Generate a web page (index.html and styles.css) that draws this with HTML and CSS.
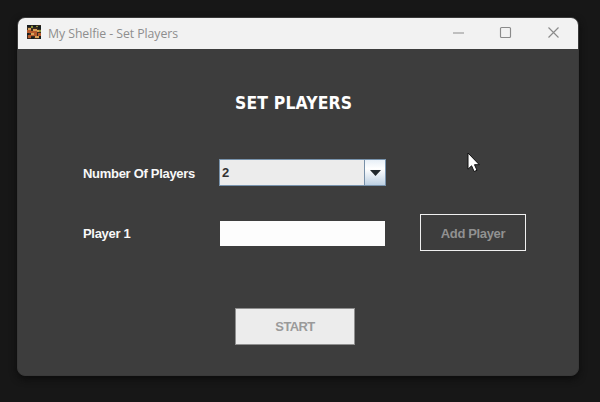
FILE: index.html
```html
<!DOCTYPE html>
<html lang="en">
<head>
<meta charset="utf-8">
<title>My Shelfie - Set Players</title>
<link rel="stylesheet" href="styles.css">
</head>
<body>
<main class="window">
  <header class="titlebar">
    <svg class="app-icon" viewBox="0 0 14 14" shape-rendering="crispEdges">
      <path fill="#3b2b20" d="M0 0h14v14H0z"/>
      <path fill="#b55a2c" d="M0 5h4v3H0zM4 6h6v5H4zM1 10h3v3H1zM11 8h3v3h-3z"/>
      <path fill="#d9a157" d="M1 3h3v2H1zM6 4h4v2H6zM4 8h3v2H4zM10 5h2v2h-2zM8 11h4v2H8z"/>
      <path fill="#171f20" d="M0 0h4v2H0zM6 0h3v2H6zM11 1h3v3h-3zM0 8h2v2H0zM12 11h2v3h-2zM4 12h3v2H4z"/>
      <path fill="#8e963b" d="M4 1h2v2H4zM9 1h2v1H9zM12 5h2v2h-2z"/>
    </svg>
    <span class="window-title">My Shelfie - Set Players</span>
    <svg class="controls" viewBox="0 0 110 14" fill="none" stroke="#8b8b8b" stroke-width="1.15">
      <path d="M2 7h11"/>
      <rect x="49.5" y="1.5" width="10" height="10" rx="1"/>
      <path d="M97.5 1.5l10 10m0-10l-10 10"/>
    </svg>
  </header>
  <form class="content">
    <h1>SET PLAYERS</h1>
    <div class="fields">
      <span class="label">Number Of Players</span>
      <div class="select">
        <span class="value">2</span>
        <span class="arrow"><svg viewBox="0 0 11 6"><path d="M0 0h11L5.5 6z" fill="#20272c"/></svg></span>
      </div>
      <span class="label player">Player 1</span>
      <input class="name" type="text" aria-label="Player 1">
      <button class="add" type="button" disabled>Add Player</button>
    </div>
    <button class="start" type="button" disabled>START</button>
  </form>
</main>
<svg class="cursor" viewBox="0 0 14 21"><path d="M1 1v16.2l3.6-3.4 2.5 5.7 2.9-1.2-2.5-5.6h4.8z" fill="#fff" stroke="#111"/></svg>
</body>
</html>
```
FILE: styles.css
```css
* { box-sizing: border-box; }
body {
  margin: 0;
  height: 402px;
  padding: 17px 21px 26px 17px;
  overflow: hidden;
  background: #171717;
  font-family: "Liberation Sans", Arial, sans-serif;
}
.window {
  width: 562px;
  height: 359px;
  overflow: hidden;
  border: 1px solid #393939;
  border-radius: 8px;
  background: #3d3d3d;
  box-shadow: 0 3px 7px #0c0c0c;
}
.titlebar {
  display: flex;
  align-items: center;
  height: 31px;
  padding: 0 17px 0 9px;
  background: #f2f2f2;
}
.app-icon { width: 14px; height: 14px; margin-top: -3px; }
.window-title {
  margin-left: 7px;
  color: #8e8e8e;
  font: 12.3px/16px "Open Sans", sans-serif;
  letter-spacing: -0.07px;
  white-space: nowrap;
}
.controls { width: 110px; height: 14px; margin-left: auto; margin-top: -1px; }
.content {
  display: flex;
  flex-direction: column;
  align-items: flex-start;
}
h1 {
  margin: 43px 0 0 217px;
  color: #fff;
  font: 700 17.4px/22px "DejaVu Sans Condensed", "DejaVu Sans", sans-serif;
  font-stretch: condensed;
  letter-spacing: 0.18px;
  white-space: nowrap;
}
.fields {
  display: grid;
  grid-template-columns: 136px 167px 140px;
  grid-template-rows: 27px 37px;
  row-gap: 28px;
  column-gap: 0;
  align-items: center;
  margin: 45px 0 0 65px;
}
.label {
  padding-top: 2px;
  color: #f8f8f8;
  font-size: 13px;
  font-weight: 700;
  line-height: 16px;
  letter-spacing: -0.3px;
  white-space: nowrap;
}
.player { grid-row: 2; }
.select {
  display: flex;
  width: 167px;
  height: 27px;
  border: 1px solid #7893ad;
  background: #ececec;
}
.value {
  flex: 1;
  padding-left: 2px;
  color: #333;
  font: 700 13px/25px "Liberation Sans", sans-serif;
}
.arrow {
  display: flex;
  align-items: center;
  justify-content: center;
  width: 21px;
  border-left: 1px solid #7890a8;
  background: linear-gradient(#e7eff7, #fff 35%, #bdd0e2);
}
.arrow svg { width: 11px; height: 6px; margin-top: 1px; }
.name {
  grid-area: 2 / 2;
  width: 165px;
  height: 25px;
  margin: 1px 0 0 1px;
  padding: 0 4px;
  border: 0;
  border-radius: 0;
  background: #fdfdfd;
}
.add {
  grid-area: 2 / 3;
  width: 106px;
  height: 37px;
  margin-left: 34px;
  padding: 2px 0 0;
  border: 1px solid #f0f0f0;
  background: transparent;
  color: #919191;
  font: 700 13px/16px "Liberation Sans", sans-serif;
  letter-spacing: -0.35px;
}
.start {
  width: 120px;
  height: 37px;
  margin: 57px 0 0 217px;
  padding: 0;
  border: 1px solid #8f8f8f;
  background: #ececec;
  color: #9a9a9a;
  font: 700 13px/16px "Liberation Sans", sans-serif;
  letter-spacing: -0.6px;
}
.cursor { position: absolute; left: 467px; top: 152px; width: 14px; height: 21px; }
```
